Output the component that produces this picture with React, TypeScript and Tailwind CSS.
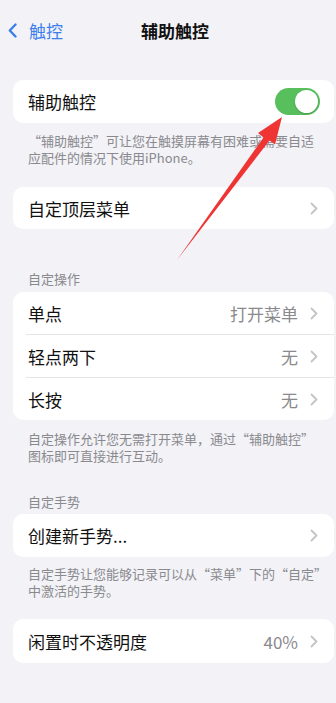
import React from "react";

const font = { fontFamily: '"Noto Sans CJK SC", "Noto Sans", sans-serif' };

function Chevron() {
  return (
    <svg width="8" height="13" viewBox="0 0 8 13" className="ml-[12px] shrink-0">
      <polyline points="1.5,1.5 6.5,6.5 1.5,11.5" fill="none" stroke="#c4c4c7" strokeWidth="1.8" strokeLinecap="round" strokeLinejoin="round" />
    </svg>
  );
}

function Row({ label, value, h = "h-[42px]" }: { label: string; value?: string; h?: string }) {
  return (
    <div className={`flex items-center ${h} pl-[15px] pr-[16px]`}>
      <span className="text-[17px] leading-none text-[#111111]">{label}</span>
      <span className="flex-1" />
      {value && <span className="text-[17px] leading-none text-[#8a8a8e]">{value}</span>}
      <Chevron />
    </div>
  );
}

function Divider() {
  return <div className="ml-[13px] h-px bg-[#e4e4e6]" />;
}

function Footer({ l1, l2, mt }: { l1: string; l2: string; mt: string }) {
  return (
    <div className={`${mt} ml-[28px] text-[13px] leading-[17px] text-[#8a8a8e]`}>
      <p className="whitespace-nowrap">{l1}</p>
      <p className="whitespace-nowrap">{l2}</p>
    </div>
  );
}

export default function App() {
  return (
    <div className="relative w-[336px] h-[703px] overflow-hidden bg-[#f2f2f7]" style={font}>
      {/* nav */}
      <div className="mt-[8px] h-[44px] flex items-center">
        <div className="flex items-center ml-[8px]">
          <svg width="9" height="15" viewBox="0 0 9 15">
            <polyline points="7.5,1.5 1.8,7.5 7.5,13.5" fill="none" stroke="#3d7fea" strokeWidth="2.4" strokeLinecap="round" strokeLinejoin="round" />
          </svg>
          <span className="ml-[12px] text-[17px] leading-none text-[#3d7fea]">触控</span>
        </div>
        <span className="ml-[78px] text-[17px] leading-none font-semibold text-[#111111]">辅助触控</span>
      </div>

      {/* card 1 */}
      <div className="mt-[28px] ml-[13px] mr-[2px] bg-white rounded-[10px] h-[43px] flex items-center pl-[15px] pr-[14px]">
        <span className="text-[17px] leading-none text-[#111111]">辅助触控</span>
        <span className="flex-1" />
        <div className="w-[45px] h-[27px] rounded-full bg-[#58bf5d] flex items-center justify-end pr-[2px]">
          <div className="w-[23px] h-[23px] rounded-full bg-white shadow-[0_1px_2px_rgba(0,0,0,0.2)]" />
        </div>
      </div>
      <Footer mt="mt-[9px]" l1="“辅助触控”可让您在触摸屏幕有困难或需要自适" l2="应配件的情况下使用iPhone。" />

      {/* card 2 */}
      <div className="mt-[21px] ml-[13px] mr-[2px] bg-white rounded-[10px]">
        <Row label="自定顶层菜单" />
      </div>

      <p className="mt-[41px] ml-[28px] text-[13px] leading-[17px] text-[#8a8a8e]">自定操作</p>
      <div className="mt-[5px] ml-[13px] mr-[2px] bg-white rounded-[10px]">
        <Row label="单点" value="打开菜单" />
        <Divider />
        <Row label="轻点两下" value="无" />
        <Divider />
        <Row label="长按" value="无" />
      </div>
      <Footer mt="mt-[10px]" l1="自定操作允许您无需打开菜单，通过“辅助触控”" l2="图标即可直接进行互动。" />

      <p className="mt-[29px] ml-[28px] text-[13px] leading-[17px] text-[#8a8a8e]">自定手势</p>
      <div className="mt-[4px] ml-[13px] mr-[2px] bg-white rounded-[10px]">
        <Row label="创建新手势..." h="h-[43px]" />
      </div>
      <Footer mt="mt-[8px]" l1="自定手势让您能够记录可以从“菜单”下的“自定”" l2="中激活的手势。" />

      <div className="mt-[20px] ml-[13px] mr-[2px] bg-white rounded-[10px]">
        <Row label="闲置时不透明度" value="40%" h="h-[44px]" />
      </div>

      {/* red arrow annotation */}
      <svg className="absolute left-0 top-0 pointer-events-none" width="336" height="703" viewBox="0 0 336 703">
        <polygon
          points="177,260 263.5,137.5 258,133 282,117 275,144.5 269.5,140.5"
          fill="#ef3434"
        />
      </svg>
    </div>
  );
}
